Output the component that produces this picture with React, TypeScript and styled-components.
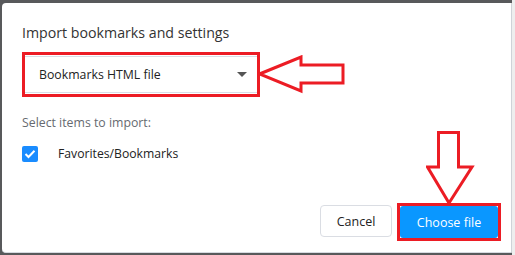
import styled, { createGlobalStyle } from "styled-components";

const GlobalStyle = createGlobalStyle`
  html, body {
    margin: 0;
    padding: 0;
    background: #58595b;
  }
  body {
    font-family: "Open Sans", "Noto Sans", Arial, sans-serif;
  }
`;

const red = "#ec1c24";

export default function App() {
  return (
    <>
      <GlobalStyle />
      <Frame>
        <Dialog>
          <Title>Import bookmarks and settings</Title>

          <SelectRow>
            <Highlight>
              <Select>
                <span>Bookmarks HTML file</span>
                <Caret />
              </Select>
            </Highlight>
            <ArrowCanvas width="90" height="46" viewBox="0 0 90 46">
              {/* outlined arrow pointing left at the select */}
              <path
                d="M2.5 19 L44 2 L44 10 L86 10 L86 28 L44 28 L44 36 Z"
                fill="none"
                stroke={red}
                strokeWidth="3"
              />
            </ArrowCanvas>
          </SelectRow>

          <SectionLabel>Select items to import:</SectionLabel>

          <CheckRow>
            <CheckBox>
              <svg width="12" height="10" viewBox="0 0 12 10">
                <path
                  d="M1.5 5 L4.5 8 L10.5 1.8"
                  fill="none"
                  stroke="#fff"
                  strokeWidth="2"
                />
              </svg>
            </CheckBox>
            <CheckLabel>Favorites/Bookmarks</CheckLabel>
          </CheckRow>

          <Footer>
            <GhostButton>Cancel</GhostButton>
            <PrimaryWrap>
              <DownArrow width="50" height="74" viewBox="0 0 50 74">
                <path
                  d="M12.5 1.5 L32.5 1.5 L32.5 36 L46 36 L23 72 L1.5 36 L12.5 36 Z"
                  fill="none"
                  stroke={red}
                  strokeWidth="3"
                />
              </DownArrow>
              <Highlight>
                <PrimaryButton>Choose file</PrimaryButton>
              </Highlight>
            </PrimaryWrap>
          </Footer>
        </Dialog>
        <RightGutter />
      </Frame>
    </>
  );
}

const Frame = styled.div`
  width: 515px;
  height: 255px;
  box-sizing: border-box;
  padding: 3px 0 2px 2px;
  display: flex;
`;

const Dialog = styled.div`
  flex: 1;
  background: #fff;
  border-radius: 4px 0 0 4px;
  border-bottom: 1px solid #d6dae0;
  border-right: 1px solid #cfd3d8;
  padding: 0 0 0 20px;
  display: flex;
  flex-direction: column;
`;

const RightGutter = styled.div`
  width: 3px;
  background: #eeeeee;
  margin-top: -3px;
  margin-bottom: -2px;
`;

const Title = styled.div`
  margin-top: 20px;
  font-size: 14.2px;
  line-height: 20px;
  color: #333;
`;

const SelectRow = styled.div`
  display: flex;
  align-items: flex-start;
  margin-top: 9px;
`;

const Highlight = styled.div`
  border: 3px solid ${red};
`;

const Select = styled.div`
  width: 232px;
  height: 37px;
  margin: 1px 0;
  box-sizing: border-box;
  border-top: 1px solid #d8dde6;
  border-bottom: 1px solid #d8dde6;
  display: flex;
  align-items: center;
  justify-content: space-between;
  padding: 0 10px 0 14px;
  font-size: 12.3px;
  color: #222;
`;

const Caret = styled.span`
  width: 0;
  height: 0;
  border-left: 5px solid transparent;
  border-right: 5px solid transparent;
  border-top: 5px solid #555;
`;

const ArrowCanvas = styled.svg`
  margin-top: 3px;
  margin-left: -3px;
  display: block;
`;

const SectionLabel = styled.div`
  margin-top: 13px;
  font-size: 12.3px;
  line-height: 18px;
  color: #666a70;
`;

const CheckRow = styled.div`
  display: flex;
  align-items: center;
  margin-top: 13px;
`;

const CheckBox = styled.div`
  width: 16px;
  height: 16px;
  border-radius: 2px;
  background: #1a8cff;
  display: flex;
  align-items: center;
  justify-content: center;
`;

const CheckLabel = styled.span`
  margin-left: 20px;
  font-size: 12.2px;
  color: #222;
`;

const Footer = styled.div`
  margin-top: auto;
  margin-bottom: 11px;
  display: flex;
  justify-content: flex-end;
  align-items: flex-end;
  gap: 5px;
  padding-right: 10px;
`;

const GhostButton = styled.button`
  width: 72px;
  height: 32px;
  margin-bottom: 4px;
  border: 1px solid #dadde3;
  border-radius: 4px;
  background: #fff;
  font-family: inherit;
  font-size: 12.5px;
  color: #222;
`;

const PrimaryWrap = styled.div`
  position: relative;
`;

/* annotation arrow overlapping the content above the button */
const DownArrow = styled.svg`
  position: absolute;
  bottom: 100%;
  left: 50%;
  margin-left: -23px;
  margin-bottom: -2px;
  display: block;
`;

const PrimaryButton = styled.button`
  display: block;
  width: 98px;
  height: 32px;
  margin: 0;
  border: none;
  border-radius: 3px;
  background: #0a97ff;
  font-family: inherit;
  font-size: 12.5px;
  color: #fff;
`;
